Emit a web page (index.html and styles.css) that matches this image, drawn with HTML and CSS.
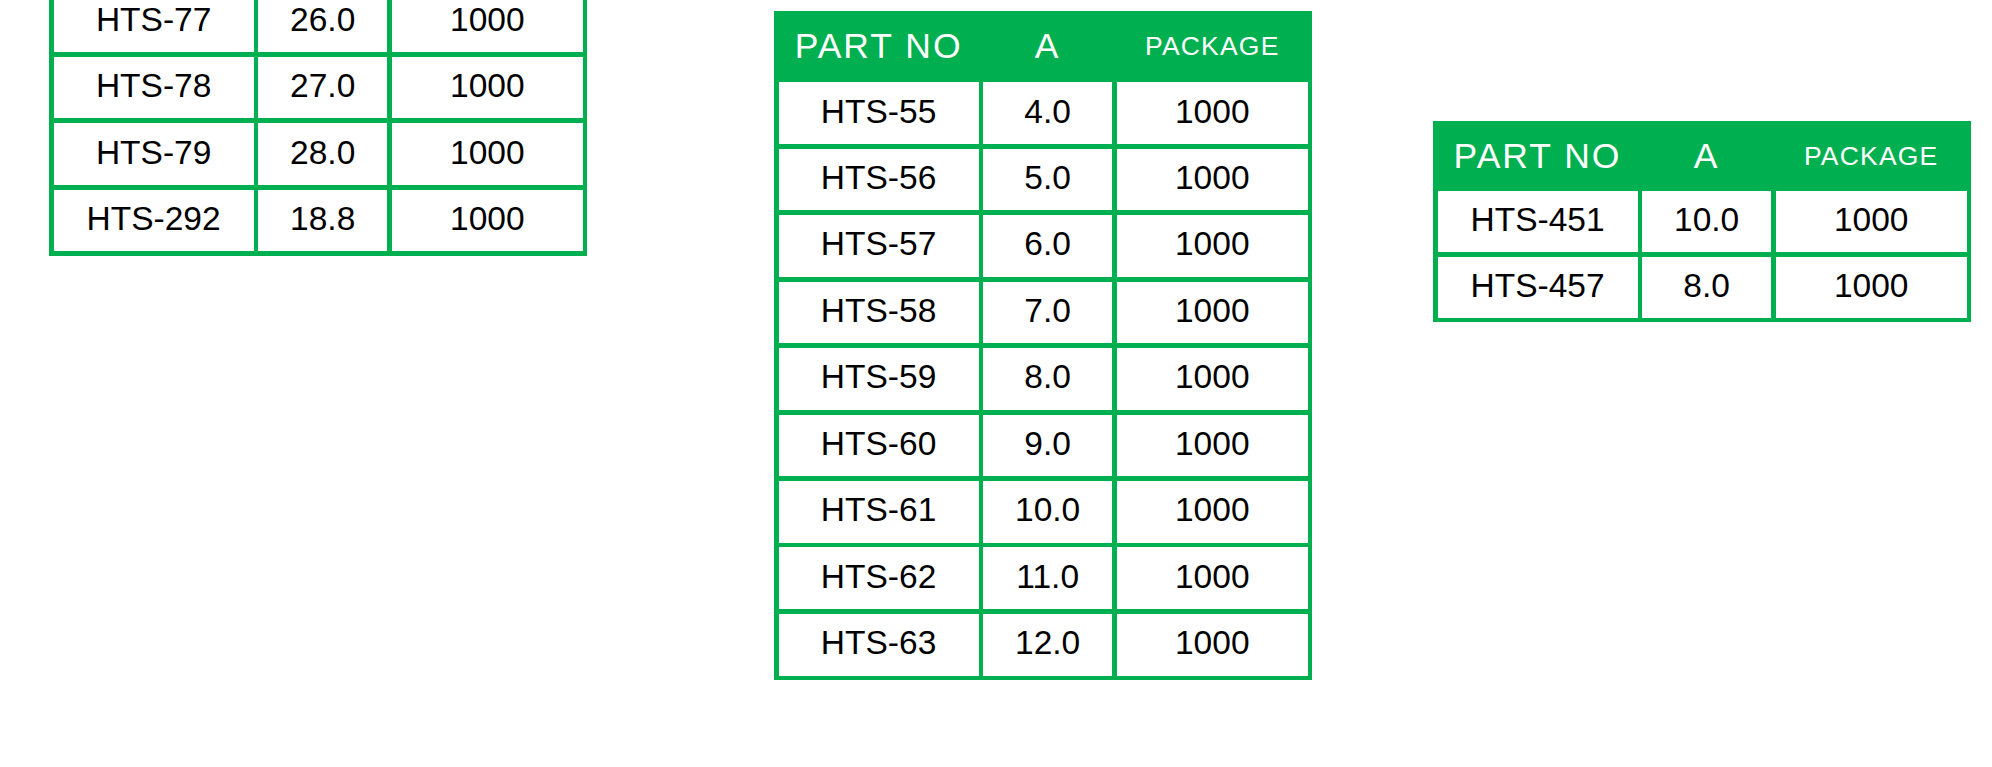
FILE: index.html
```html
<!DOCTYPE html>
<html lang="en">
<head>
<meta charset="utf-8">
<title>Part list</title>
<link rel="stylesheet" href="styles.css">
</head>
<body>
<div class="page">
  <div class="parts parts-left">
    <div class="cell">HTS-77</div><div class="cell">26.0</div><div class="cell">1000</div>
    <div class="cell">HTS-78</div><div class="cell">27.0</div><div class="cell">1000</div>
    <div class="cell">HTS-79</div><div class="cell">28.0</div><div class="cell">1000</div>
    <div class="cell">HTS-292</div><div class="cell">18.8</div><div class="cell">1000</div>
  </div>

  <div class="parts parts-mid">
    <div class="head">PART NO</div><div class="head">A</div><div class="head head-small">PACKAGE</div>
    <div class="cell">HTS-55</div><div class="cell">4.0</div><div class="cell">1000</div>
    <div class="cell">HTS-56</div><div class="cell">5.0</div><div class="cell">1000</div>
    <div class="cell">HTS-57</div><div class="cell">6.0</div><div class="cell">1000</div>
    <div class="cell">HTS-58</div><div class="cell">7.0</div><div class="cell">1000</div>
    <div class="cell">HTS-59</div><div class="cell">8.0</div><div class="cell">1000</div>
    <div class="cell">HTS-60</div><div class="cell">9.0</div><div class="cell">1000</div>
    <div class="cell">HTS-61</div><div class="cell">10.0</div><div class="cell">1000</div>
    <div class="cell">HTS-62</div><div class="cell">11.0</div><div class="cell">1000</div>
    <div class="cell">HTS-63</div><div class="cell">12.0</div><div class="cell">1000</div>
  </div>

  <div class="parts parts-right">
    <div class="head">PART NO</div><div class="head">A</div><div class="head head-small">PACKAGE</div>
    <div class="cell">HTS-451</div><div class="cell">10.0</div><div class="cell">1000</div>
    <div class="cell">HTS-457</div><div class="cell">8.0</div><div class="cell">1000</div>
  </div>
</div>
</body>
</html>
```

FILE: styles.css
```css
html, body {
  margin: 0;
  padding: 0;
  background: #ffffff;
}

body {
  font-family: "Liberation Sans", Arial, sans-serif;
  color: #000000;
  overflow: hidden;
}

.page {
  display: flex;
  align-items: flex-start;
  padding-left: 49px;
}

.parts {
  display: grid;
  grid-template-columns: 200px 129px 191px;
  grid-auto-rows: 61.9px;
  gap: 4.6px;
  padding: 4.6px;
  background: #00b050;
}

.parts-left {
  margin-top: -14.5px;
}

.parts-mid {
  margin-top: 11px;
  margin-left: 186.6px;
}

.parts-right {
  margin-top: 121px;
  margin-left: 120.6px;
  grid-auto-rows: 61px;
}

.cell {
  background: #ffffff;
  display: flex;
  align-items: center;
  justify-content: center;
  font-size: 33.5px;
  padding-bottom: 3px;
  box-sizing: border-box;
  white-space: nowrap;
}

.head {
  display: flex;
  align-items: center;
  justify-content: center;
  color: #ffffff;
  font-size: 35.5px;
  letter-spacing: 2px;
  white-space: nowrap;
}

.head-small {
  font-size: 26.5px;
  letter-spacing: 1.2px;
}
```
